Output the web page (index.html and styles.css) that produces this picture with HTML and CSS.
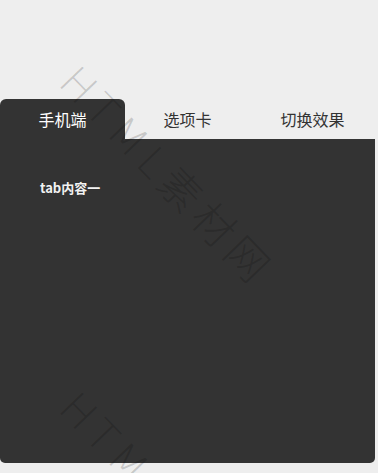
FILE: index.html
```html
<!DOCTYPE html>
<html>
<head>
    <meta charset="utf-8">
    <title>手机端选项卡切换效果</title>
    <link rel="stylesheet" href="styles.css">
</head>
<body>
    <div class="tab-box">
        <!-- Tab headers -->
        <div class="tab-head">
            <div class="tab active">手机端</div>
            <div class="tab">选项卡</div>
            <div class="tab">切换效果</div>
        </div>

        <!-- Tab content -->
        <div class="tab-body">
            <div class="tab-item">tab内容一</div>
        </div>
    </div>

    <!-- watermark -->
    <div class="mark mark-1">HTML素材网</div>
    <div class="mark mark-2">HTML素材网</div>
</body>
</html>
```

FILE: styles.css
```css
body {
    margin: 0;
    background: #eeeeee;
    font-family: "Noto Sans CJK SC", "Liberation Sans", sans-serif;
    overflow: hidden;
    height: 473px;
    position: relative;
}
.tab-box {
    width: 375px;
    padding-top: 99px;
}
.tab-head {
    display: flex;
    height: 40px;
}
.tab {
    flex: 1;
    text-align: center;
    line-height: 40px;
    font-size: 16px;
    color: #333;
}
.tab.active {
    background: #333;
    color: #fff;
    border-radius: 6px 6px 0 0;
}
.tab-body {
    background: #333;
    height: 324px;
    border-radius: 0 0 5px 5px;
    box-sizing: border-box;
    padding: 40px 0 0 40px;
}
.tab-item {
    color: #f2f2f2;
    font-size: 13px;
    font-weight: bold;
    line-height: 18px;
}
.mark {
    position: absolute;
    font-family: "DejaVu Sans", "Noto Sans CJK SC", sans-serif;
    font-weight: 200;
    font-size: 42px;
    letter-spacing: 6px;
    color: rgba(0, 0, 0, 0.16);
    transform-origin: 0 0;
    transform: rotate(46deg);
    white-space: nowrap;
    pointer-events: none;
}
.mark-1 {
    left: 92px;
    top: 50px;
}
.mark-2 {
    left: 92px;
    top: 376px;
}
```
